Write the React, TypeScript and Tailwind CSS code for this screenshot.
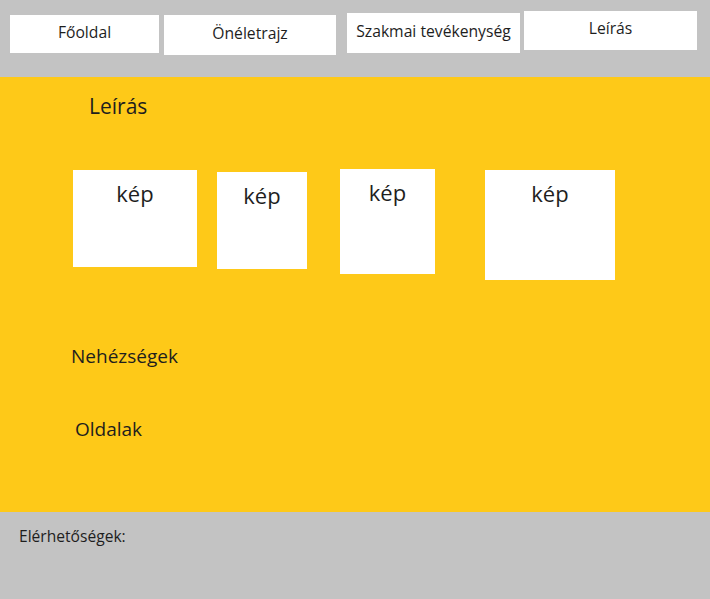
const navItems = [
  { label: "Főoldal", box: "ml-[10px] mt-[15px] h-[38px] w-[149px]" },
  { label: "Önéletrajz", box: "ml-[5px] mt-[15px] h-[40px] w-[172px]" },
  { label: "Szakmai tevékenység", box: "ml-[11px] mt-[13px] h-[40px] w-[173px]" },
  { label: "Leírás", box: "ml-[4px] mt-[11px] h-[39px] w-[173px]" },
];

const pictures = [
  "ml-[73px] mt-[1px] h-[97px] w-[124px]",
  "ml-[20px] mt-[3px] h-[97px] w-[90px]",
  "ml-[33px] mt-0 h-[105px] w-[95px]",
  "ml-[50px] mt-[1px] h-[110px] w-[130px]",
];

export default function App() {
  return (
    <div className="flex h-[599px] w-[710px] flex-col overflow-hidden bg-[#c3c3c3] font-['Open_Sans',sans-serif] text-[#1e1e1e]">
      <nav className="flex h-[77px] shrink-0 items-start">
        {navItems.map((item) => (
          <div
            key={item.label}
            className={`flex items-center justify-center bg-white pb-[3px] text-[15.7px] ${item.box}`}
          >
            {item.label}
          </div>
        ))}
      </nav>

      <main className="flex h-[435px] shrink-0 flex-col bg-[#fec918]">
        <h1 className="ml-[89px] mt-[15px] text-[21px] leading-[28px]">Leírás</h1>

        <div className="mt-[49px] flex items-start">
          {pictures.map((box, i) => (
            <div key={i} className={`flex justify-center bg-white pt-[8px] ${box}`}>
              <span className="text-[22px] leading-[30px]">kép</span>
            </div>
          ))}
        </div>

        <p className="ml-[71px] mt-[64px] text-[19px] leading-[24px]">Nehézségek</p>
        <p className="ml-[75px] mt-[49px] text-[19px] leading-[24px]">Oldalak</p>
      </main>

      <footer className="flex-1 pl-[19px] pt-[14px]">
        <p className="text-[15.6px] leading-[20px]">Elérhetőségek:</p>
      </footer>
    </div>
  );
}
